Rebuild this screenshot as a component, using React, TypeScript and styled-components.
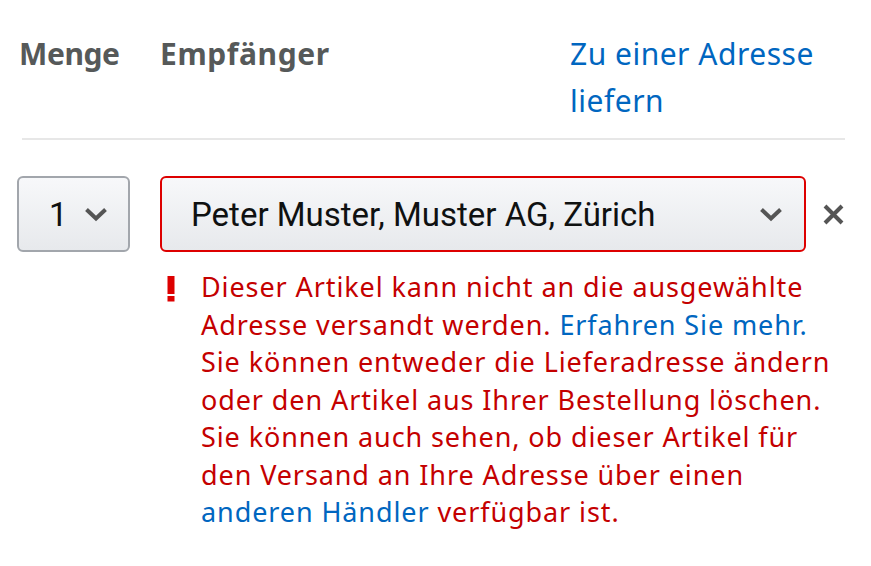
import styled, { createGlobalStyle } from 'styled-components';

const GlobalStyle = createGlobalStyle`
  html, body {
    margin: 0;
    padding: 0;
    background: #fff;
  }
  body {
    font-family: "Noto Sans", Roboto, "Liberation Sans", Arial, sans-serif;
    color: #0f1111;
  }
`;

export default function App() {
  return (
    <>
      <GlobalStyle />
      <Page>
        <Header>
          <QtyTitle>Menge</QtyTitle>
          <RecipientTitle>Empfänger</RecipientTitle>
          <HeaderLink href="#">Zu einer Adresse liefern</HeaderLink>
        </Header>
        <Divider />

        <ItemRow>
          <QtyButton>
            <span>1</span>
            <Chevron />
          </QtyButton>
          <AddressSelect>
            <span>Peter Muster, Muster AG, Zürich</span>
            <Chevron />
          </AddressSelect>
          <RemoveButton aria-label="Entfernen">
            <svg width="23" height="21" viewBox="0 0 23 21">
              <path d="M3 2 L20 19 M20 2 L3 19" stroke="#555" strokeWidth="4" fill="none" />
            </svg>
          </RemoveButton>
        </ItemRow>

        <ErrorBox>
          <AlertIcon>
            <svg width="8" height="26" viewBox="0 0 8 26">
              <rect x="0.5" y="0" width="7" height="18" fill="#d00" />
              <rect x="0.5" y="20" width="7" height="5.5" fill="#d00" />
            </svg>
          </AlertIcon>
          <ErrorText>
            Dieser Artikel kann nicht an die ausgewählte Adresse versandt werden.{' '}
            <InlineLink href="#">Erfahren Sie mehr.</InlineLink> Sie können entweder die
            Lieferadresse ändern oder den Artikel aus Ihrer Bestellung löschen. Sie können auch
            sehen, ob dieser Artikel für den Versand an Ihre Adresse über einen{' '}
            <InlineLink href="#">anderen Händler</InlineLink> verfügbar ist.
          </ErrorText>
        </ErrorBox>
      </Page>
    </>
  );
}

function Chevron() {
  return (
    <svg width="24" height="15" viewBox="0 0 24 15">
      <path d="M2.5 2.5 L12 11.5 L21.5 2.5" stroke="#555" strokeWidth="4" fill="none" />
    </svg>
  );
}

const Page = styled.div`
  padding: 30px 26px 40px 17px;
`;

const Header = styled.div`
  display: flex;
  align-items: flex-start;
  font-size: 30px;
  line-height: 47px;
`;

const QtyTitle = styled.div`
  width: 143px;
  padding-left: 2px;
  box-sizing: border-box;
  font-weight: 700;
  letter-spacing: -0.4px;
  color: #565959;
`;

const RecipientTitle = styled.div`
  flex: 1;
  font-weight: 700;
  letter-spacing: 0.6px;
  color: #565959;
`;

const HeaderLink = styled.a`
  width: 275px;
  color: #0066c0;
  letter-spacing: 0.5px;
  text-decoration: none;
`;

const Divider = styled.hr`
  border: 0;
  height: 2px;
  background: #e7e7e7;
  margin: 14px 0 36px 5px;
`;

const selectBase = `
  display: flex;
  align-items: center;
  box-sizing: border-box;
  height: 76px;
  border-radius: 6px;
  background: linear-gradient(to bottom, #f7f8fa, #e7e9ec);
  font-family: Roboto, "Noto Sans", sans-serif;
  font-size: 33px;
  color: #0f1111;
  cursor: pointer;
`;

const QtyButton = styled.div`
  ${selectBase}
  width: 113px;
  border: 2px solid #a2a6ac;
  padding: 0 0 0 30px;
  gap: 16px;
`;

const AddressSelect = styled.div`
  ${selectBase}
  flex: 1;
  margin-left: 30px;
  border: 2px solid #dd0000;
  padding: 0 21px 0 29px;
  justify-content: space-between;
`;

const RemoveButton = styled.button`
  border: 0;
  background: none;
  padding: 0;
  margin-left: 16px;
  display: flex;
  align-items: center;
  cursor: pointer;
`;

const ItemRow = styled.div`
  display: flex;
  align-items: center;
`;

const ErrorBox = styled.div`
  display: flex;
  align-items: flex-start;
  margin: 16px 0 0 143px;
`;

const AlertIcon = styled.div`
  width: 41px;
  padding: 8px 0 0 7px;
  box-sizing: border-box;
  flex-shrink: 0;
  display: flex;
`;

const ErrorText = styled.p`
  margin: 0;
  font-size: 27px;
  letter-spacing: 0.9px;
  line-height: 37.5px;
  color: #c40000;
  max-width: 640px;
`;

const InlineLink = styled.a`
  color: #0066c0;
  text-decoration: none;
`;
